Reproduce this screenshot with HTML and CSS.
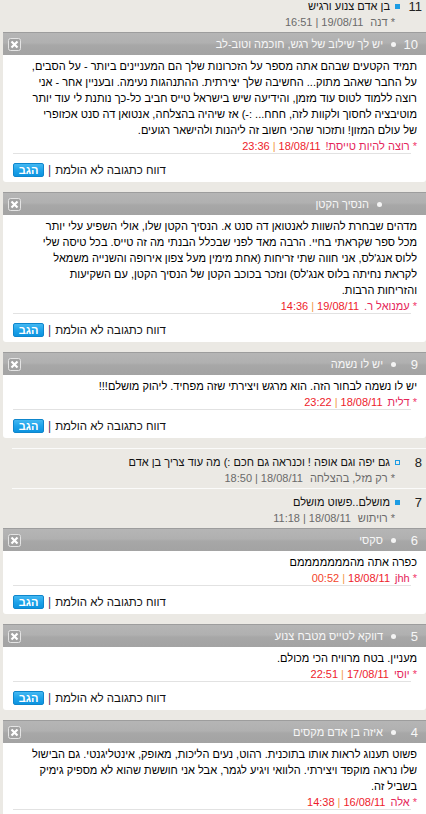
FILE: index.html
```html
<!DOCTYPE html>
<html lang="he" dir="rtl">
<head>
<meta charset="utf-8">
<title>תגובות</title>
<link rel="stylesheet" href="styles.css">
</head>
<body>
<div class="list">

  <div class="row row-first">
    <div class="row-head"><span class="num">11</span><span class="sq"></span><span class="row-title">בן אדם צנוע ורגיש</span></div>
    <div class="row-meta"><span>*</span><span class="rm-name">דנה</span><span>19/08/11</span><span>|</span><span>16:51</span></div>
  </div>

  <div class="card">
    <div class="card-head"><span class="num">10</span><span class="dot"></span><span class="head-title">יש לך שילוב של רגש, חוכמה וטוב-לב</span><span class="close"><svg width="13" height="13" viewBox="0 0 13 13"><rect x="0.5" y="0.5" width="12" height="12" rx="2" fill="#a2a2a2" stroke="#e4e4e4"/><path d="M3.5 3.5 L9.5 9.5 M9.5 3.5 L3.5 9.5" stroke="#fff" stroke-width="2.2"/></svg></span></div>
    <div class="card-body">
      <p class="text">תמיד הקטעים שבהם אתה מספר על הזכרונות שלך הם המעניינים ביותר - על הסבים,<br>על החבר שאהב מתוק... החשיבה שלך יצירתית. ההתנהגות נעימה. ובעניין אחר - אני<br>רוצה ללמוד לטוס עוד מזמן, והידיעה שיש בישראל טייס חביב כל-כך נותנת לי עוד יותר<br>מוטיבציה לחסוך ולקוות לזה, חחח... :-) אז שיהיה בהצלחה, אנטואן דה סנט אכזופרי<br>של עולם המזון! ותזכור שהכי חשוב זה ליהנות ולהישאר רגועים.</p>
      <div class="meta"><span class="star">*</span><span class="name">רוצה להיות טייסת!</span><span class="date">18/08/11</span><span class="pipe">|</span><span class="date">23:36</span></div>
    </div>
    <div class="actions"><span class="report">דווח כתגובה לא הולמת</span><span class="apipe">|</span><span class="reply">הגב</span></div>
  </div>

  <div class="card">
    <div class="card-head nonum"><span class="dot"></span><span class="head-title">הנסיך הקטן</span><span class="close"><svg width="13" height="13" viewBox="0 0 13 13"><rect x="0.5" y="0.5" width="12" height="12" rx="2" fill="#a2a2a2" stroke="#e4e4e4"/><path d="M3.5 3.5 L9.5 9.5 M9.5 3.5 L3.5 9.5" stroke="#fff" stroke-width="2.2"/></svg></span></div>
    <div class="card-body">
      <p class="text">מדהים שבחרת להשוות לאנטואן דה סנט א. הנסיך הקטן שלו, אולי השפיע עלי יותר<br>מכל ספר שקראתי בחיי. הרבה מאד לפני שבכלל הבנתי מה זה טייס. בכל טיסה שלי<br>ללוס אנג'לס, אני חווה שתי זריחות (אחת מימין מעל צפון אירופה והשנייה משמאל<br>לקראת נחיתה בלוס אנג'לס) ונזכר בכוכב הקטן של הנסיך הקטן, עם השקיעות<br>והזריחות הרבות.</p>
      <div class="meta"><span class="star">*</span><span class="name">עמנואל ר.</span><span class="date">19/08/11</span><span class="pipe">|</span><span class="date">14:36</span></div>
    </div>
    <div class="actions"><span class="report">דווח כתגובה לא הולמת</span><span class="apipe">|</span><span class="reply">הגב</span></div>
  </div>

  <div class="card">
    <div class="card-head"><span class="num">9</span><span class="dot"></span><span class="head-title">יש לו נשמה</span><span class="close"><svg width="13" height="13" viewBox="0 0 13 13"><rect x="0.5" y="0.5" width="12" height="12" rx="2" fill="#a2a2a2" stroke="#e4e4e4"/><path d="M3.5 3.5 L9.5 9.5 M9.5 3.5 L3.5 9.5" stroke="#fff" stroke-width="2.2"/></svg></span></div>
    <div class="card-body">
      <p class="text">יש לו נשמה לבחור הזה. הוא מרגש ויצירתי שזה מפחיד. ליהוק מושלם!!!</p>
      <div class="meta"><span class="star">*</span><span class="name">דלית</span><span class="date">18/08/11</span><span class="pipe">|</span><span class="date">23:22</span></div>
    </div>
    <div class="actions"><span class="report">דווח כתגובה לא הולמת</span><span class="apipe">|</span><span class="reply">הגב</span></div>
  </div>

  <div class="row">
    <div class="row-head"><span class="num">8</span><span class="sq sq-open"></span><span class="row-title">גם יפה וגם אופה ! וכנראה גם חכם :) מה עוד צריך בן אדם</span></div>
    <div class="row-meta"><span>*</span><span class="rm-name">רק מזל, בהצלחה</span><span>18/08/11</span><span>|</span><span>18:50</span></div>
  </div>

  <div class="row">
    <div class="row-head"><span class="num">7</span><span class="sq"></span><span class="row-title">מושלם..פשוט מושלם</span></div>
    <div class="row-meta"><span>*</span><span class="rm-name">רויתוש</span><span>18/08/11</span><span>|</span><span>11:18</span></div>
  </div>

  <div class="card">
    <div class="card-head"><span class="num">6</span><span class="dot"></span><span class="head-title">סקסי</span><span class="close"><svg width="13" height="13" viewBox="0 0 13 13"><rect x="0.5" y="0.5" width="12" height="12" rx="2" fill="#a2a2a2" stroke="#e4e4e4"/><path d="M3.5 3.5 L9.5 9.5 M9.5 3.5 L3.5 9.5" stroke="#fff" stroke-width="2.2"/></svg></span></div>
    <div class="card-body">
      <p class="text">כפרה אתה מהמממממממם</p>
      <div class="meta"><span class="star">*</span><span class="name">jhh</span><span class="date">18/08/11</span><span class="pipe">|</span><span class="time">00:52</span></div>
    </div>
    <div class="actions"><span class="report">דווח כתגובה לא הולמת</span><span class="apipe">|</span><span class="reply">הגב</span></div>
  </div>

  <div class="card">
    <div class="card-head"><span class="num">5</span><span class="dot"></span><span class="head-title">דווקא לטייס מטבח צנוע</span><span class="close"><svg width="13" height="13" viewBox="0 0 13 13"><rect x="0.5" y="0.5" width="12" height="12" rx="2" fill="#a2a2a2" stroke="#e4e4e4"/><path d="M3.5 3.5 L9.5 9.5 M9.5 3.5 L3.5 9.5" stroke="#fff" stroke-width="2.2"/></svg></span></div>
    <div class="card-body">
      <p class="text">מעניין. בטח מרוויח הכי מכולם.</p>
      <div class="meta"><span class="star">*</span><span class="name">יוסי</span><span class="date">17/08/11</span><span class="pipe">|</span><span class="date">22:51</span></div>
    </div>
    <div class="actions"><span class="report">דווח כתגובה לא הולמת</span><span class="apipe">|</span><span class="reply">הגב</span></div>
  </div>

  <div class="card">
    <div class="card-head"><span class="num">4</span><span class="dot"></span><span class="head-title">איזה בן אדם מקסים</span><span class="close"><svg width="13" height="13" viewBox="0 0 13 13"><rect x="0.5" y="0.5" width="12" height="12" rx="2" fill="#a2a2a2" stroke="#e4e4e4"/><path d="M3.5 3.5 L9.5 9.5 M9.5 3.5 L3.5 9.5" stroke="#fff" stroke-width="2.2"/></svg></span></div>
    <div class="card-body">
      <p class="text">פשוט תענוג לראות אותו בתוכנית. רהוט, נעים הליכות, מאופק, אינטליגנטי. גם הבישול<br>שלו נראה מוקפד ויצירתי. הלוואי ויגיע לגמר, אבל אני חוששת שהוא לא מספיק גימיק<br>בשביל זה.</p>
      <div class="meta"><span class="star">*</span><span class="name">אלה</span><span class="date">16/08/11</span><span class="pipe">|</span><span class="date">14:38</span></div>
    </div>
    <div class="actions"><span class="report">דווח כתגובה לא הולמת</span><span class="apipe">|</span><span class="reply">הגב</span></div>
  </div>

</div>
</body>
</html>
```
FILE: styles.css
```css
html, body {
  margin: 0;
  padding: 0;
  background: #ebe9e4;
}
body {
  font-family: "Liberation Sans", Arial, sans-serif;
  font-size: 11px;
  color: #000;
  direction: rtl;
  overflow: hidden;
}
.list {
  padding-left: 3px;
}

/* collapsed rows */
.row {
  border-top: 1px solid #fbfbfa;
  margin-left: 9px;
  padding: 5px 0 3px 0;
}
.row-first {
  margin-top: -8px;
}
.row-head {
  display: flex;
  align-items: center;
  height: 16px;
  font-size: 11px;
}
.row .num {
  font-size: 13px;
  color: #222;
  width: 16px;
  padding-right: 4px;
  text-align: right;
}
.sq {
  width: 5px;
  height: 5px;
  background: #1d9ce3;
  margin: 0 6px 0 5px;
}
.sq-open {
  width: 3px;
  height: 3px;
  background: transparent;
  border: 1px solid #1d9ce3;
}
.row-title {
  color: #111;
}
.row-meta {
  display: flex;
  gap: 3px;
  height: 15px;
  align-items: center;
  padding-right: 31px;
  font-size: 11px;
  color: #6a6a6a;
}
.row-meta .rm-name {
  margin-left: 4px;
}

/* cards */
.card {
  background: #fff;
  margin-bottom: 10px;
  border-radius: 0 0 3px 3px;
}
.card-head {
  display: flex;
  align-items: center;
  height: 22px;
  border-top: 1px solid #9d9d9d;
  background: linear-gradient(to bottom, #b5b5b5 0%, #b0b0b0 45%, #a7a7a7 55%, #a3a3a3 100%);
  color: #f7f7f7;
  font-size: 11px;
  padding: 0 8px 0 5px;
}
.card-head .num {
  font-size: 13px;
  width: 12px;
  text-align: right;
}
.dot {
  width: 5px;
  height: 5px;
  border-radius: 50%;
  background: #f4f4f4;
  margin: 0 10px 0 8px;
}
.nonum .dot {
  margin-right: 36px;
}
.close {
  margin-right: auto;
  display: flex;
}
.card-body {
  padding: 3px 9px 0 15px;
}
.text {
  margin: 0;
  line-height: 16px;
  white-space: nowrap;
}
.meta {
  display: flex;
  align-items: center;
  gap: 3px;
  height: 15px;
  font-size: 11px;
}
.star {
  color: #f2386b;
}
.name {
  color: #e5255a;
  margin-left: 2px;
}
.date {
  color: #ee1c2c;
}
.time {
  color: #f3452a;
}
.pipe {
  color: #f39a4a;
}
.actions {
  border-top: 1px solid #e2e2e2;
  margin: 0 15px 0 10px;
  padding: 8px 0 4px 0;
  display: flex;
  justify-content: flex-end;
  align-items: center;
  gap: 4px;
  height: 16px;
}
.report {
  color: #111;
  font-size: 11.5px;
}
.apipe {
  color: #5a1f5e;
  font-size: 12px;
}
.reply {
  display: flex;
  align-items: center;
  justify-content: center;
  width: 29px;
  height: 12px;
  border: 1px solid #0e86cc;
  border-radius: 2px;
  background: linear-gradient(to bottom, #44b8f2 0%, #1ea3ea 50%, #0d93df 100%);
  color: #fff;
  font-weight: bold;
  font-size: 11px;
}
```
